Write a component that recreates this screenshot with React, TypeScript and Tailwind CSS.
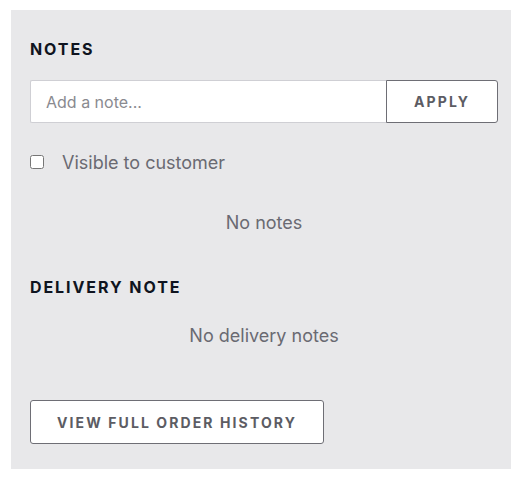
import React from "react";

export default function App() {
  return (
    <div className="w-[529px] h-[481px] bg-white pt-[10px] pl-[11px]" style={{ fontFamily: "Inter, 'Noto Sans', sans-serif" }}>
      <div className="w-[500px] h-[459px] bg-[#e8e8ea] pl-[19px] pr-[13px] pt-[27px]">
        <h2 className="text-[16px] font-bold tracking-[0.12em] text-[#0f1420] leading-[24px]">NOTES</h2>
        <div className="mt-[19px] flex h-[43px] w-full">
          <input
            className="flex-1 min-w-0 h-full bg-white border border-[#cfcfd4] border-r-0 rounded-l-[2px] px-[15px] text-[16px] text-[#333] placeholder:text-[#8a8a90] outline-none"
            placeholder="Add a note..."
          />
          <button className="w-[112px] h-full bg-white border border-[#6e6e75] rounded-r-[3px] text-[14px] font-bold tracking-[0.15em] text-[#5c5c63]">
            APPLY
          </button>
        </div>
        <label className="mt-[21px] flex items-center h-[40px]">
          <input type="checkbox" className="w-[14px] h-[14px] m-0 -mt-[4px]" />
          <span className="ml-[18px] text-[18px] leading-[24px] text-[#6a6a72] -mt-[2px]">Visible to customer</span>
        </label>
        <div className="mt-[19px] text-center text-[18px] text-[#6a6a72] leading-[40px]">No notes</div>
        <h2 className="mt-[32px] text-[16px] font-bold tracking-[0.12em] text-[#0f1420] leading-[24px]">DELIVERY NOTE</h2>
        <div className="mt-[25px] text-center text-[18px] text-[#6a6a72] leading-[24px]">No delivery notes</div>
        <button className="mt-[52px] w-[294px] h-[44px] bg-white border border-[#6e6e75] rounded-[3px] text-[14px] font-bold tracking-[0.15em] text-[#5c5c63]">
          VIEW FULL ORDER HISTORY
        </button>
      </div>
    </div>
  );
}
